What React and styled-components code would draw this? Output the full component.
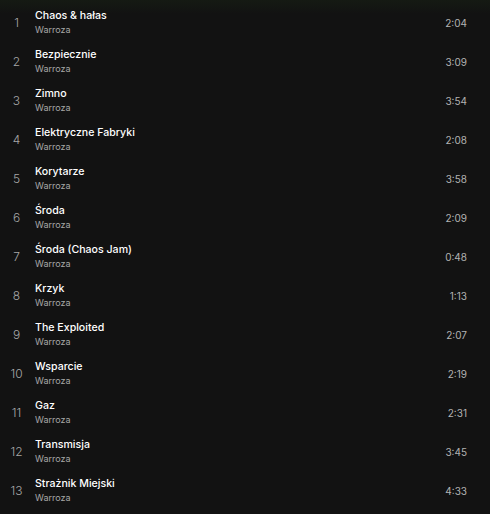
import styled, { createGlobalStyle } from 'styled-components';

const GlobalStyle = createGlobalStyle`
body {
  margin: 0;
  background: #121212;
  font-family: Inter, "Noto Sans", sans-serif;
}
`;

const tracks = [
  ["Chaos & hałas", "2:04"],
  ["Bezpiecznie", "3:09"],
  ["Zimno", "3:54"],
  ["Elektryczne Fabryki", "2:08"],
  ["Korytarze", "3:58"],
  ["Środa", "2:09"],
  ["Środa (Chaos Jam)", "0:48"],
  ["Krzyk", "1:13"],
  ["The Exploited", "2:07"],
  ["Wsparcie", "2:19"],
  ["Gaz", "2:31"],
  ["Transmisja", "3:45"],
  ["Strażnik Miejski", "4:33"],
];

const Container = styled.div`
width: 490px;
height: 514px;
overflow: hidden;
padding-top: 3px;
box-sizing: border-box;
background: linear-gradient(to bottom, #151a13 0px, #121212 14px);
`;

const Row = styled.div`
display: flex;
flex-direction: row;
align-items: center;
height: 39px;
`;

const Num = styled.div`
width: 35px;
text-align: center;
padding-right: 2px;
box-sizing: border-box;
font-size: 12px;
font-weight: 300;
color: #a7a7a7;
`;

const Info = styled.div`
flex: 1;
display: flex;
flex-direction: column;
`;

const Title = styled.div`
font-size: 10.6px;
font-weight: 500;
line-height: 14px;
color: #ffffff;
`;

const Artist = styled.div`
font-size: 9px;
line-height: 14px;
color: #a7a7a7;
`;

const Duration = styled.div`
width: 60px;
padding-right: 23px;
box-sizing: border-box;
text-align: right;
font-size: 10px;
color: #b3b3b3;
`;

function App() {
  return (
    <Container>
      <GlobalStyle />
      {tracks.map(([title, time], index) => (
        <Row key={index}>
          <Num>{index + 1}</Num>
          <Info>
            <Title>{title}</Title>
            <Artist>Warroza</Artist>
          </Info>
          <Duration>{time}</Duration>
        </Row>
      ))}
    </Container>
  );
}

export default App;
